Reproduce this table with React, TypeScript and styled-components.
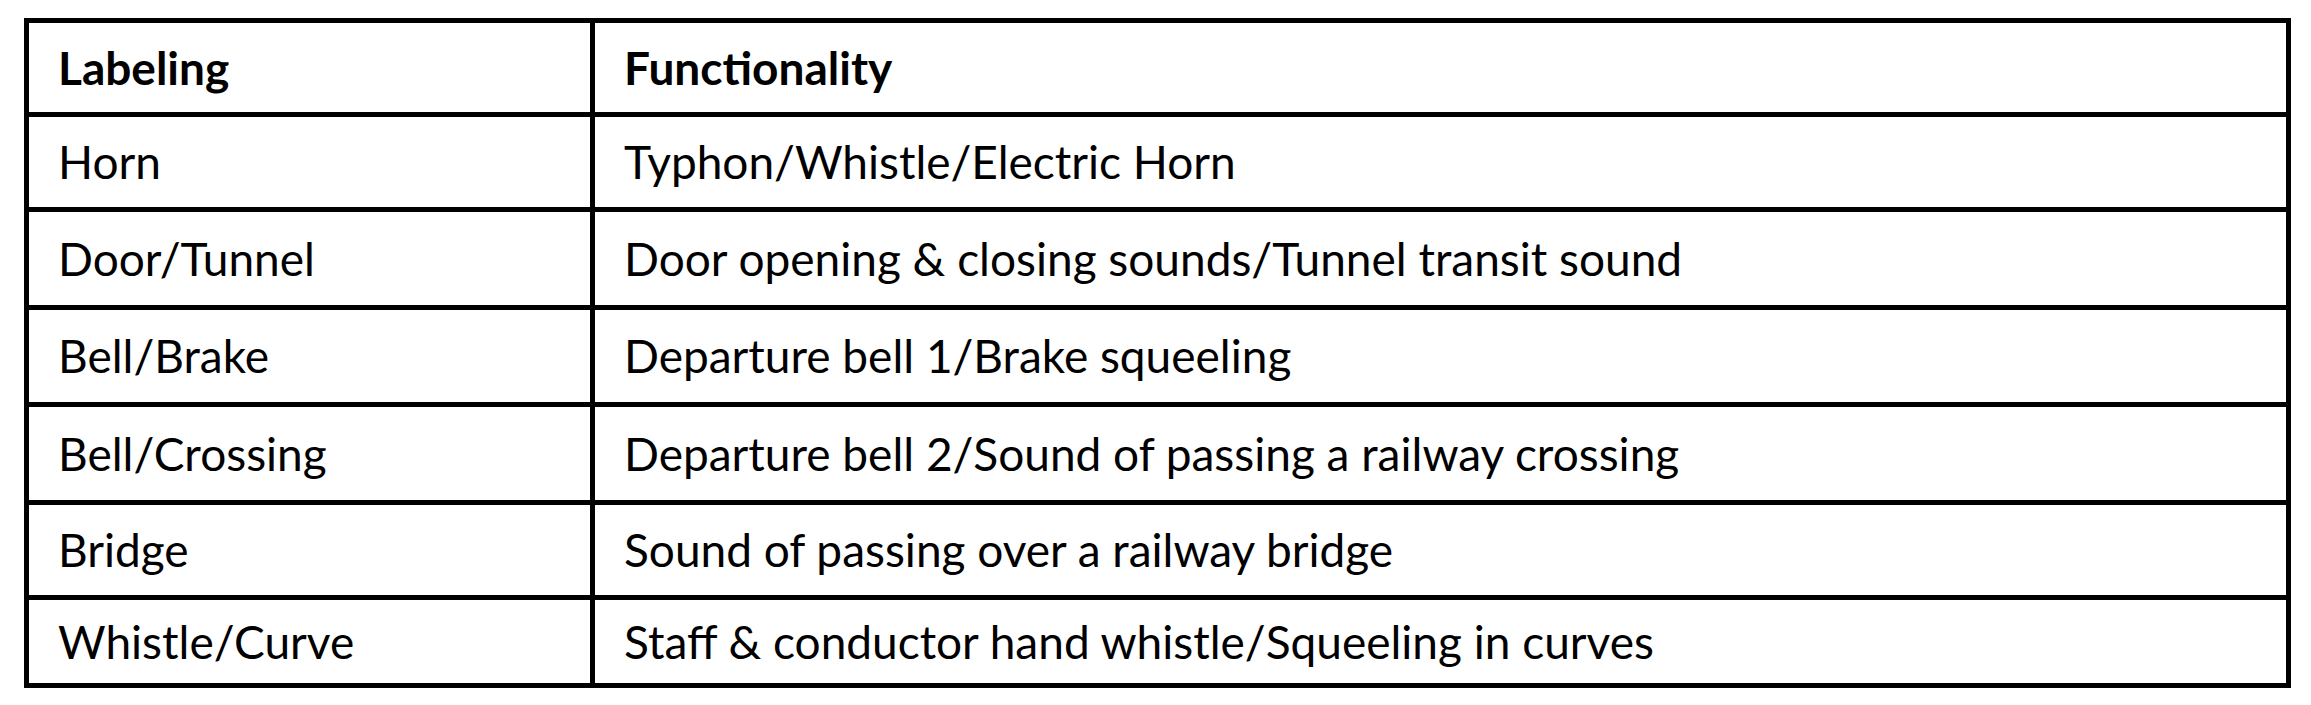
import React from 'react';
import styled, { createGlobalStyle } from 'styled-components';

const GlobalStyle = createGlobalStyle`
  html, body {
    margin: 0;
    padding: 0;
    background: #ffffff;
  }
  body {
    font-family: Lato, "Open Sans", sans-serif;
    color: #000000;
  }
`;

const Page = styled.div`
  padding: 18px 0 0 24px;
`;

const SoundTable = styled.table`
  width: 2267px;
  border-collapse: collapse;
  table-layout: fixed;
  font-family: Lato, "Open Sans", sans-serif;
  font-size: 46px;
  color: #000;
`;

const Row = styled.tr<{ $h: number }>`
  height: ${(p) => p.$h}px;
`;

const HeadCell = styled.th<{ $w?: number }>`
  border: 5px solid #000;
  padding: 0 29px;
  text-align: left;
  font-weight: 700;
  vertical-align: middle;
  ${(p) => (p.$w ? `width: ${p.$w}px;` : '')}
`;

const Cell = styled.td`
  border: 5px solid #000;
  padding: 0 29px;
  text-align: left;
  font-weight: 400;
  vertical-align: middle;
  white-space: nowrap;
`;

const rows: [string, string, number][] = [
  ['Horn', 'Typhon/Whistle/Electric Horn', 95.5],
  ['Door/Tunnel', 'Door opening & closing sounds/Tunnel transit sound', 97.5],
  ['Bell/Brake', 'Departure bell 1/Brake squeeling', 97.5],
  ['Bell/Crossing', 'Departure bell 2/Sound of passing a railway crossing', 97.5],
  ['Bridge', 'Sound of passing over a railway bridge', 95.5],
  ['Whistle/Curve', 'Staff & conductor hand whistle/Squeeling in curves', 88],
];

const App: React.FC = () => {
  return (
    <Page>
      <GlobalStyle />
      <SoundTable>
        <thead>
          <Row $h={93.5}>
            <HeadCell $w={503}>Labeling</HeadCell>
            <HeadCell>Functionality</HeadCell>
          </Row>
        </thead>
        <tbody>
          {rows.map(([label, fn, h]) => (
            <Row key={label} $h={h}>
              <Cell>{label}</Cell>
              <Cell>{fn}</Cell>
            </Row>
          ))}
        </tbody>
      </SoundTable>
    </Page>
  );
};

export default App;
